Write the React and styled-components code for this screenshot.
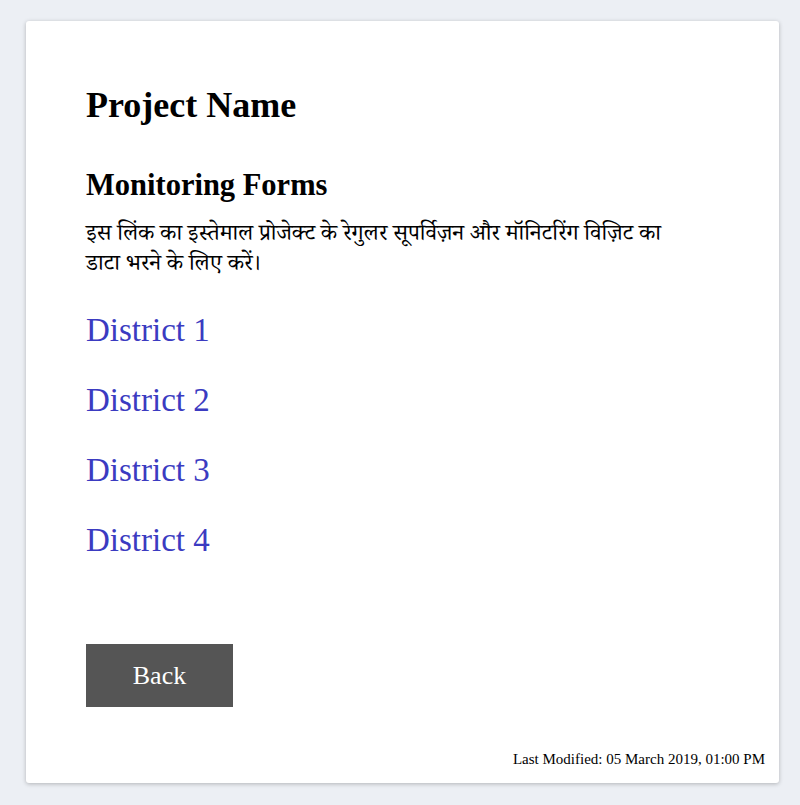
import React from "react";
import styled, { createGlobalStyle } from "styled-components";

const Global = createGlobalStyle`
  html, body { margin: 0; padding: 0; background: #eceff4; }
  body { font-family: "Liberation Serif", "Noto Serif Devanagari", "Noto Sans Devanagari", serif; color: #000; }
`;

const Page = styled.div`
  padding: 21px 21px 22px 26px;
  min-height: 805px;
  box-sizing: border-box;
`;

const Card = styled.div`
  background: #fff;
  border-radius: 3px;
  box-shadow: 0 1px 4px rgba(0, 0, 0, 0.25);
  padding: 62px 14px 16px 60px;
  display: flex;
  flex-direction: column;
  min-height: 761px;
  box-sizing: border-box;
`;

const Title = styled.h1`
  margin: 0;
  font-size: 36px;
  font-weight: 700;
  line-height: 44px;
`;

const Subtitle = styled.h2`
  margin: 40px 0 0;
  font-size: 30.5px;
  font-weight: 700;
  line-height: 36px;
`;

const Description = styled.p`
  margin: 15px 0 0;
  font-size: 23px;
  line-height: 30px;
  max-width: 600px;
`;

const Links = styled.div`
  display: flex;
  flex-direction: column;
  gap: 34px;
  margin-top: 34px;
`;

const DistrictLink = styled.a`
  font-size: 33px;
  line-height: 36px;
  color: #3b3bc1;
  text-decoration: none;
  align-self: flex-start;
`;

const BackButton = styled.button`
  margin-top: 86px;
  align-self: flex-start;
  width: 147px;
  height: 63px;
  border: none;
  background: #555555;
  color: #fff;
  font-family: "Liberation Serif", serif;
  font-size: 26px;
`;

const Footer = styled.div`
  margin-top: 44px;
  align-self: flex-end;
  font-size: 15px;
  line-height: 16px;
`;

const districts = ["District 1", "District 2", "District 3", "District 4"];

export default function App() {
  return (
    <>
      <Global />
      <Page>
        <Card>
          <Title>Project Name</Title>
          <Subtitle>Monitoring Forms</Subtitle>
          <Description>
            इस लिंक का इस्तेमाल प्रोजेक्ट के रेगुलर सूपर्विज़न और मॉनिटरिंग विज़िट का डाटा भरने के लिए करें।
          </Description>
          <Links>
            {districts.map((d) => (
              <DistrictLink key={d} href="#">
                {d}
              </DistrictLink>
            ))}
          </Links>
          <BackButton>Back</BackButton>
          <Footer>Last Modified: 05 March 2019, 01:00 PM</Footer>
        </Card>
      </Page>
    </>
  );
}
